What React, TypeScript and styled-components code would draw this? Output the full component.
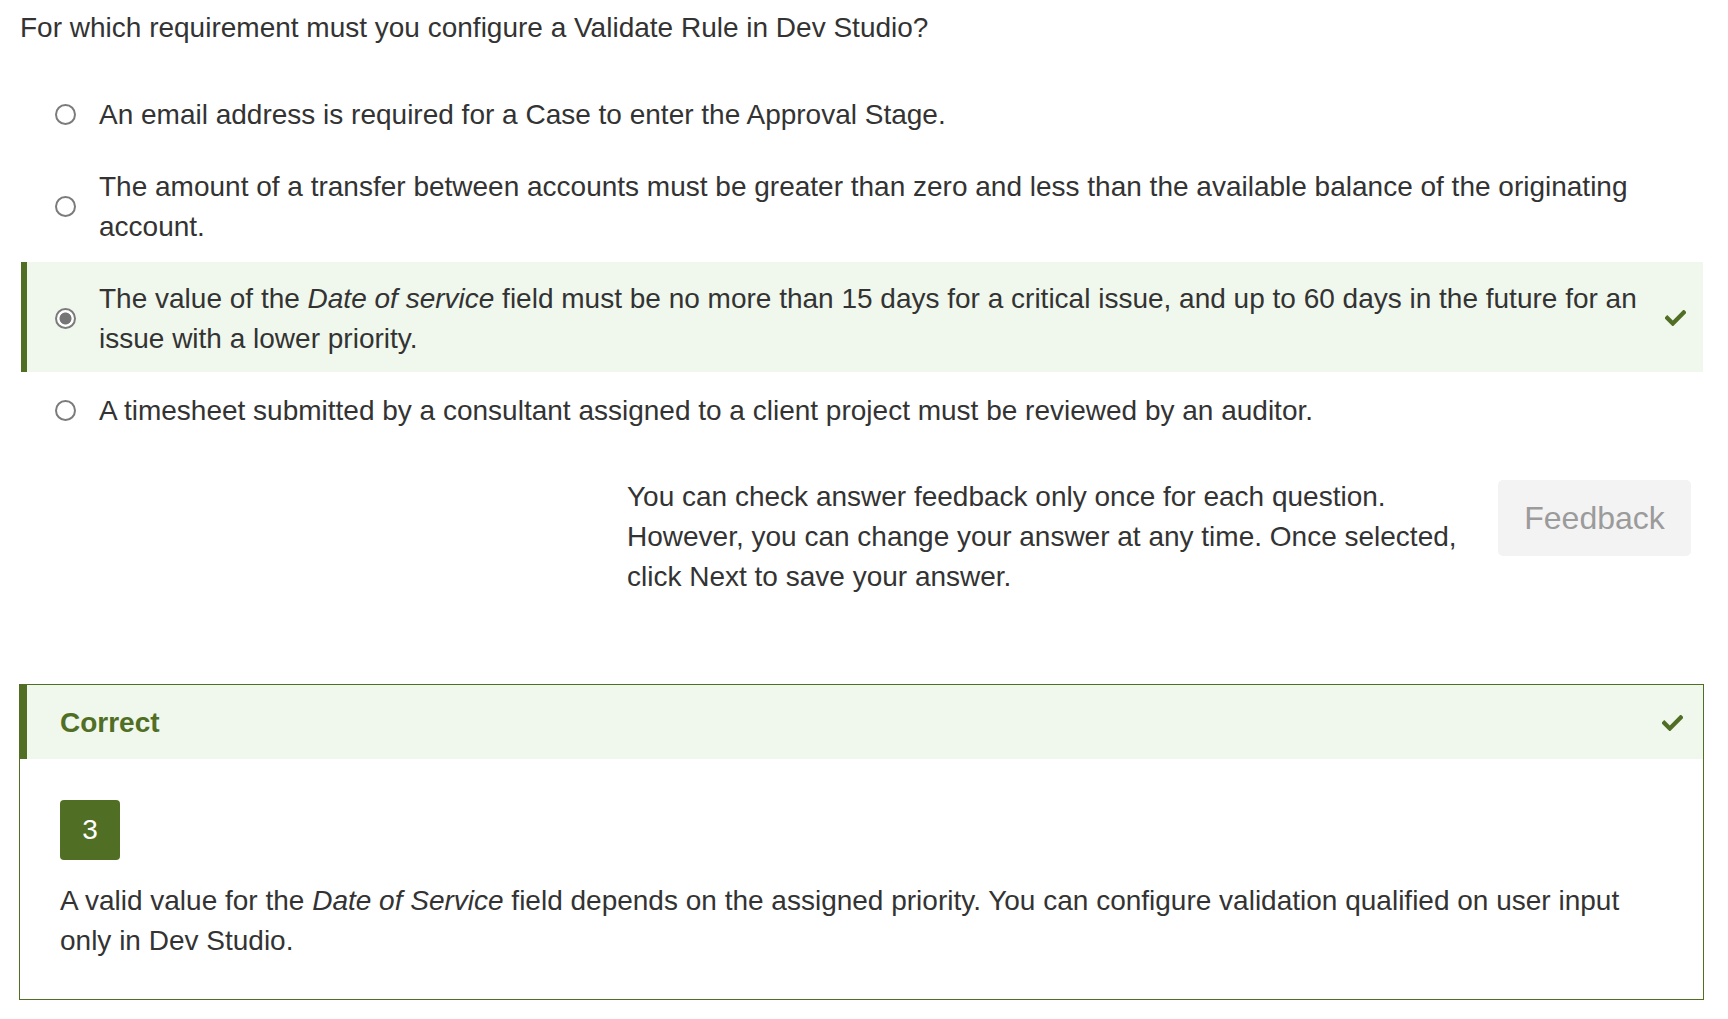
import React from "react";
import styled, { createGlobalStyle } from "styled-components";

const GREEN = "#506e24";
const PALE = "#f0f7ed";
const TEXT = "#333333";

const Global = createGlobalStyle`
  html, body { margin: 0; padding: 0; background: #ffffff; }
  body {
    font-family: "Liberation Sans", Arial, Helvetica, sans-serif;
    color: ${TEXT};
    font-size: 28px;
    line-height: 40px;
  }
  * { box-sizing: border-box; }
`;

const Page = styled.main`
  padding: 8px 24px 20px 19px;
  width: 1728px;
`;

const Question = styled.p`
  margin: 0 0 30px 0;
  padding-left: 1px;
  font-size: 28px;
  line-height: 40px;
`;

const OptionList = styled.div`
  display: flex;
  flex-direction: column;
  gap: 2px;
  margin: 0 1px 0 2px;
`;

const OptionRow = styled.label<{ $selected?: boolean }>`
  display: flex;
  align-items: center;
  padding: 17px 17px 13px 28px;
  border-left: 6px solid ${(p) => (p.$selected ? GREEN : "transparent")};
  background: ${(p) => (p.$selected ? PALE : "transparent")};
  cursor: pointer;
`;

const Radio = styled.input.attrs({ type: "radio" })`
  appearance: none;
  -webkit-appearance: none;
  margin: -2px 0 0 0;
  flex: 0 0 21px;
  width: 21px;
  height: 21px;
  border-radius: 50%;
  border: 2px solid #7b7b7b;
  background: #ffffff;
  &:checked {
    background: radial-gradient(circle, #767676 0 5.6px, #ffffff 6.4px);
  }
`;

const OptionText = styled.span`
  flex: 1;
  margin-left: 23px;
  font-size: 28px;
  line-height: 40px;
`;

const CheckSlot = styled.span`
  flex: 0 0 21px;
  width: 21px;
  height: 16px;
  margin: -2px 0 0 14px;
  display: flex;
  align-items: center;
  justify-content: center;
`;

const FeedbackArea = styled.div`
  display: flex;
  justify-content: flex-end;
  align-items: flex-start;
  gap: 26px;
  margin-top: 33px;
  padding-right: 13px;
`;

const FeedbackNote = styled.p`
  margin: 0;
  width: 845px;
  font-size: 28px;
  line-height: 40px;
`;

const FeedbackButton = styled.button`
  margin-top: 3px;
  height: 76px;
  width: 193px;
  padding: 0;
  border: none;
  border-radius: 5px;
  background: #f3f3f3;
  color: #9b9b9b;
  font-family: "Liberation Sans", Arial, sans-serif;
  font-size: 32px;
  line-height: 76px;
  cursor: not-allowed;
`;

const ResultPanel = styled.section`
  margin-top: 87px;
  border: 1px solid ${GREEN};
`;

const ResultHeader = styled.header`
  display: flex;
  align-items: center;
  justify-content: space-between;
  height: 74px;
  padding: 2px 20px 0 33px;
  border-left: 7px solid ${GREEN};
  background: ${PALE};
`;

const ResultTitle = styled.h3`
  margin: 0;
  font-size: 28px;
  line-height: 40px;
  font-weight: 700;
  color: ${GREEN};
`;

const ResultBody = styled.div`
  padding: 41px 40px 38px 40px;
`;

const AnswerBadge = styled.div`
  width: 60px;
  height: 60px;
  border-radius: 4px;
  background: ${GREEN};
  color: #ffffff;
  font-size: 28px;
  line-height: 60px;
  text-align: center;
  margin-bottom: 21px;
`;

const Explanation = styled.p`
  margin: 0;
  font-size: 28px;
  line-height: 40px;
`;

const CheckIcon = () => (
  <svg width="21" height="16" viewBox="7 70 498 372" fill={GREEN} aria-hidden="true">
    <path d="M173.898 439.404l-166.4-166.4c-9.997-9.997-9.997-26.206 0-36.204l36.203-36.204c9.997-9.998 26.207-9.998 36.204 0L192 312.69 432.095 72.596c9.997-9.997 26.207-9.997 36.204 0l36.203 36.204c9.997 9.997 9.997 26.206 0 36.204l-294.4 294.401c-9.998 9.997-26.207 9.997-36.204-.001z" />
  </svg>
);

type Opt = { id: number; content: React.ReactNode };

const options: Opt[] = [
  { id: 1, content: "An email address is required for a Case to enter the Approval Stage." },
  {
    id: 2,
    content:
      "The amount of a transfer between accounts must be greater than zero and less than the available balance of the originating account.",
  },
  {
    id: 3,
    content: (
      <>
        The value of the <em>Date of service</em> field must be no more than 15 days for a critical issue, and up
        to 60 days in the future for an issue with a lower priority.
      </>
    ),
  },
  {
    id: 4,
    content: "A timesheet submitted by a consultant assigned to a client project must be reviewed by an auditor.",
  },
];

export default function App() {
  const [selected, setSelected] = React.useState(3);
  return (
    <>
      <Global />
      <Page>
        <Question>For which requirement must you configure a Validate Rule in Dev Studio?</Question>
        <OptionList role="radiogroup">
          {options.map((o) => {
            const isSel = o.id === selected;
            return (
              <OptionRow key={o.id} $selected={isSel}>
                <Radio name="q" checked={isSel} onChange={() => setSelected(o.id)} />
                <OptionText>{o.content}</OptionText>
                <CheckSlot>{isSel ? <CheckIcon /> : null}</CheckSlot>
              </OptionRow>
            );
          })}
        </OptionList>
        <FeedbackArea>
          <FeedbackNote>
            You can check answer feedback only once for each question. However, you can change your answer at any
            time. Once selected, click Next to save your answer.
          </FeedbackNote>
          <FeedbackButton disabled>Feedback</FeedbackButton>
        </FeedbackArea>
        <ResultPanel>
          <ResultHeader>
            <ResultTitle>Correct</ResultTitle>
            <CheckIcon />
          </ResultHeader>
          <ResultBody>
            <AnswerBadge>3</AnswerBadge>
            <Explanation>
              A valid value for the <em>Date of Service</em> field depends on the assigned priority. You can configure
              validation qualified on user input only in Dev Studio.
            </Explanation>
          </ResultBody>
        </ResultPanel>
      </Page>
    </>
  );
}
